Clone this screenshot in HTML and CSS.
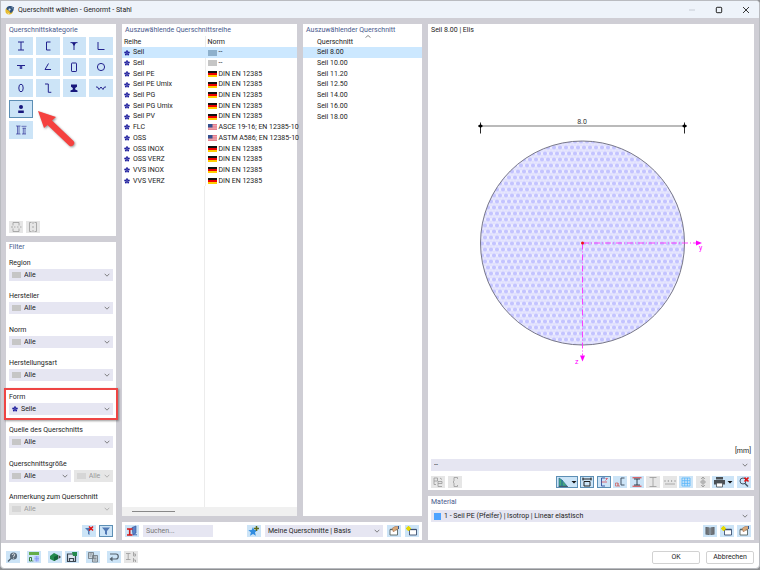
FILE: index.html
```
<!DOCTYPE html>
<html lang="de">
<head>
    <meta charset="UTF-8">
    <meta name="viewport" content="width=device-width, initial-scale=1.0">
    <title>Querschnitt wählen - Genormt - Stahl</title>
    <link rel="stylesheet" href="styles.css">
</head>
<body>
    <!-- Gemeinsame Symbole -->
    <svg class="symbols" width="0" height="0" aria-hidden="true">
        <symbol id="rope" viewBox="0 0 12 12">
            <g fill="#1c1c9c"><circle cx="6" cy="2.4" r="2"/><circle cx="9.6" cy="5" r="2"/><circle cx="8.2" cy="9.2" r="2"/><circle cx="3.8" cy="9.2" r="2"/><circle cx="2.4" cy="5" r="2"/><circle cx="6" cy="6" r="2"/></g>
        </symbol>
        <symbol id="chevron" viewBox="0 0 6 6"><path d="M.7 1.8 3 4.2 5.3 1.8" fill="none" stroke="#666" stroke-width=".8"/></symbol>
        <symbol id="de" viewBox="0 0 9 6"><path fill="#111" d="M0 0h9v2H0z"/><path fill="#e00" d="M0 2h9v2H0z"/><path fill="#fc0" d="M0 4h9v2H0z"/></symbol>
        <symbol id="us" viewBox="0 0 9 6"><path fill="#f3b3bb" d="M0 0h9v6H0z"/><path stroke="#dc6676" stroke-width=".7" d="M0 .5h9M0 2.2h9M0 3.9h9M0 5.6h9"/><path fill="#34508e" d="M0 0h4.500v3.500H0z"/></symbol>
        <symbol id="newwin" viewBox="0 0 14 12">
            <path fill="#fff" stroke="#3c5070" stroke-width=".9" d="M4.500 4.500h7v5.500h-7z"/><path stroke="#3c5070" stroke-width="1.300" d="M4.500 4.500h7"/><path stroke="#e6d800" stroke-width="1.200" d="M3.500 1v5M1 3.500h5M1.800 1.800l3.400 3.400M5.200 1.800 1.800 5.200"/>
        </symbol>
        <symbol id="editwin" viewBox="0 0 14 12">
            <path fill="#fff" stroke="#566" stroke-width=".9" d="M3 4.500h7.500V10H3z"/><path stroke="#566" stroke-width="1.300" d="M3 4.500h7.500"/><path fill="#d9a878" stroke="#96694a" stroke-width=".5" d="M5 3.500 8 1.500h3.500v2.200L8 5.500 6.500 7z"/><path stroke="#35578f" d="M11.500 1v3"/>
        </symbol>
    </svg>

    <div class="window">
        <header class="titlebar">
            <svg class="app-icon" viewBox="0 0 12 12"><circle cx="5" cy="7" r="4.500" fill="#e6bb2c"/><path d="M2 5.500C1 2 5 .5 8 1.500l3 1.500-1 4-3 3-2-3z" fill="#31547e"/><circle cx="5.500" cy="5.500" r="1.300" fill="#dce8f5"/><path d="M3 9.500l2 1M8 3l2 1" stroke="#fff" stroke-width=".6"/></svg>
            <h1>Querschnitt wählen - Genormt - Stahl</h1>
            <div class="window-controls">
                <button type="button" aria-label="Minimieren" disabled><svg viewBox="0 0 8 8"><path d="M1 4h6" stroke="#bcc2cb" stroke-width=".8"/></svg></button>
                <button type="button" aria-label="Maximieren"><svg viewBox="0 0 8 8"><rect x="1.300" y="1.300" width="5.400" height="5.400" rx=".8" fill="none" stroke="#222"/></svg></button>
                <button type="button" aria-label="Schließen"><svg viewBox="0 0 8 8"><path d="m1 1 6 6M7 1 1 7" stroke="#222" stroke-width=".9"/></svg></button>
            </div>
        </header>

        <main class="content">
            <!-- Linke Spalte -->
            <div class="col-left">
                <section class="panel category">
                    <h2>Querschnittskategorie</h2>
                    <div class="tiles">
                        <button type="button" aria-label="I-Profil"><svg viewBox="0 0 12 12"><path d="M3 2h6M3 10h6M6 2v8"/></svg></button>
                        <button type="button" aria-label="U-Profil"><svg viewBox="0 0 12 12"><path d="M8.500 2H4.500v8h4"/></svg></button>
                        <button type="button" aria-label="T-Profil"><svg viewBox="0 0 12 12"><path d="M2.500 2.600h7M6 2.500V10"/><path class="solid" d="M4 3h4L6 6z"/></svg></button>
                        <button type="button" aria-label="L-Profil"><svg viewBox="0 0 12 12"><path d="M3 2v7.500h6.500"/></svg></button>
                        <button type="button" aria-label="Doppel-L"><svg viewBox="0 0 12 12"><path d="M2 4.500h8M5.300 4.500V8M6.700 4.500V8"/></svg></button>
                        <button type="button" aria-label="Winkel"><svg viewBox="0 0 12 12"><path d="M6.500 2.500 3 8.500h6"/></svg></button>
                        <button type="button" aria-label="Rechteckrohr"><svg viewBox="0 0 12 12"><rect x="3.500" y="2" width="5" height="8.500" rx=".6"/></svg></button>
                        <button type="button" aria-label="Rundrohr"><svg viewBox="0 0 12 12"><circle cx="6" cy="6" r="3.600"/></svg></button>
                        <button type="button" aria-label="Oval"><svg viewBox="0 0 12 12"><ellipse cx="6" cy="6" rx="2.200" ry="3.800"/></svg></button>
                        <button type="button" aria-label="Z-Profil"><svg viewBox="0 0 12 12"><path d="M3 2h3.300v8.300h3"/></svg></button>
                        <button type="button" aria-label="Schiene"><svg viewBox="0 0 12 12"><path class="solid" d="M3 2.500h6v2.300L7.200 6v1.500L9.500 8.500V10h-7V8.500l2.300-1V6L3 4.800z"/></svg></button>
                        <button type="button" aria-label="Trapezblech"><svg viewBox="0 0 12 12"><path d="M1 5h1.500L4 7.500 6 5l2 2.500L9.500 5H11"/></svg></button>
                        <button type="button" class="selected" aria-label="Vollprofil"><svg viewBox="0 0 12 12"><circle class="solid" cx="6" cy="4" r="2"/><path class="solid" d="M3.200 7.500h5.600V10H3.200z"/></svg></button>
                        <button type="button" class="row-start" aria-label="Zusammengesetzt"><svg viewBox="0 0 12 12"><path class="thin" d="M1 2h4.500M1 10h4.500M2.500 2v8M4 2v8M6.500 2.300h5M7.500 4.200h3.500M8.300 4v6M10 4v6M7 10h4"/></svg></button>
                    </div>
                    <div class="mini-tools">
                        <button type="button" class="tool off" aria-label="Horizontal geteilt"><svg viewBox="0 0 14 12"><path d="M4 4.500v-3h6v3M4 7.500v3h6v-3M2 6h2M5 6h1.500M8 6h1.500M11 6h1.500"/></svg></button>
                        <button type="button" class="tool off" aria-label="Vertikal geteilt"><svg viewBox="0 0 14 12"><path d="M5.500 1.500H3.500v9h2M8.500 1.500h2v9h-2M7 1v2M7 5v2M7 9v2"/></svg></button>
                    </div>
                </section>

                <section class="panel filter">
                    <h2>Filter</h2>
                    <div class="fields">
                        <div class="field">
                            <label for="region">Region</label>
                            <div class="combo"><span class="swatch"></span><select id="region"><option>Alle</option></select><svg class="chev"><use href="#chevron"/></svg></div>
                        </div>
                        <div class="field">
                            <label for="hersteller">Hersteller</label>
                            <div class="combo"><span class="swatch"></span><select id="hersteller"><option>Alle</option></select><svg class="chev"><use href="#chevron"/></svg></div>
                        </div>
                        <div class="field">
                            <label for="norm">Norm</label>
                            <div class="combo"><span class="swatch"></span><select id="norm"><option>Alle</option></select><svg class="chev"><use href="#chevron"/></svg></div>
                        </div>
                        <div class="field">
                            <label for="art">Herstellungsart</label>
                            <div class="combo"><span class="swatch"></span><select id="art"><option>Alle</option></select><svg class="chev"><use href="#chevron"/></svg></div>
                        </div>
                        <div class="field marked">
                            <label for="form">Form</label>
                            <div class="combo"><svg class="rope"><use href="#rope"/></svg><select id="form"><option>Seile</option></select><svg class="chev"><use href="#chevron"/></svg></div>
                        </div>
                        <div class="field">
                            <label for="quelle">Quelle des Querschnitts</label>
                            <div class="combo"><span class="swatch"></span><select id="quelle"><option>Alle</option></select><svg class="chev"><use href="#chevron"/></svg></div>
                        </div>
                        <div class="field">
                            <label for="groesse">Querschnittsgröße</label>
                            <div class="pair">
                                <div class="combo wide"><span class="swatch"></span><select id="groesse"><option>Alle</option></select><svg class="chev"><use href="#chevron"/></svg></div>
                                <div class="combo off"><span class="swatch"></span><select aria-label="Größenwert" disabled><option>Alle</option></select><svg class="chev"><use href="#chevron"/></svg></div>
                            </div>
                        </div>
                        <div class="field">
                            <label for="anmerkung">Anmerkung zum Querschnitt</label>
                            <div class="combo off"><span class="swatch"></span><select id="anmerkung" disabled><option>Alle</option></select><svg class="chev"><use href="#chevron"/></svg></div>
                        </div>
                    </div>
                    <div class="filter-tools">
                        <button type="button" class="tool" aria-label="Filter löschen"><svg viewBox="0 0 14 12"><path fill="#5078b4" d="M3 3h7L7.500 6v4L6 9V6z"/><path stroke="#e01010" stroke-width="1.500" d="m7 1.500 4 4M11 1.500l-4 4"/></svg></button>
                        <button type="button" class="tool pressed" aria-label="Filter"><svg viewBox="0 0 14 12"><path fill="#5078b4" d="M3 2.500h8L8 6v4L6 9V6z"/></svg></button>
                    </div>
                </section>
            </div>

            <!-- Mittlere Spalte -->
            <div class="col-middle">
                <div class="lists">
                    <section class="panel series">
                        <h2>Auszuwählende Querschnittsreihe</h2>
                        <table class="series-table">
                            <thead>
                                <tr><th>Reihe</th><th>Norm</th></tr>
                            </thead>
                            <tbody>
                                <tr class="selected"><td><svg class="rope"><use href="#rope"/></svg>Seil</td><td><span class="swatch"></span>--</td></tr>
                                <tr><td><svg class="rope"><use href="#rope"/></svg>Seil</td><td><span class="swatch"></span>--</td></tr>
                                <tr><td><svg class="rope"><use href="#rope"/></svg>Seil PE</td><td><svg class="flag"><use href="#de"/></svg>DIN EN 12385</td></tr>
                                <tr><td><svg class="rope"><use href="#rope"/></svg>Seil PE Umix</td><td><svg class="flag"><use href="#de"/></svg>DIN EN 12385</td></tr>
                                <tr><td><svg class="rope"><use href="#rope"/></svg>Seil PG</td><td><svg class="flag"><use href="#de"/></svg>DIN EN 12385</td></tr>
                                <tr><td><svg class="rope"><use href="#rope"/></svg>Seil PG Umix</td><td><svg class="flag"><use href="#de"/></svg>DIN EN 12385</td></tr>
                                <tr><td><svg class="rope"><use href="#rope"/></svg>Seil PV</td><td><svg class="flag"><use href="#de"/></svg>DIN EN 12385</td></tr>
                                <tr><td><svg class="rope"><use href="#rope"/></svg>FLC</td><td><svg class="flag"><use href="#us"/></svg>ASCE 19-16; EN 12385-10</td></tr>
                                <tr><td><svg class="rope"><use href="#rope"/></svg>OSS</td><td><svg class="flag"><use href="#us"/></svg>ASTM A586; EN 12385-10</td></tr>
                                <tr><td><svg class="rope"><use href="#rope"/></svg>OSS INOX</td><td><svg class="flag"><use href="#de"/></svg>DIN EN 12385</td></tr>
                                <tr><td><svg class="rope"><use href="#rope"/></svg>OSS VERZ</td><td><svg class="flag"><use href="#de"/></svg>DIN EN 12385</td></tr>
                                <tr><td><svg class="rope"><use href="#rope"/></svg>VVS INOX</td><td><svg class="flag"><use href="#de"/></svg>DIN EN 12385</td></tr>
                                <tr><td><svg class="rope"><use href="#rope"/></svg>VVS VERZ</td><td><svg class="flag"><use href="#de"/></svg>DIN EN 12385</td></tr>
                            </tbody>
                        </table>
                        <div class="table-rest"></div>
                        <div class="scrollbar"><div class="thumb"></div></div>
                    </section>

                    <section class="panel sections">
                        <h2>Auszuwählender Querschnitt</h2>
                        <table class="section-table">
                            <thead>
                                <tr><th>Querschnitt<svg class="sort" viewBox="0 0 6 3"><path d="M.5 2.600 3 .5l2.500 2.100" fill="none" stroke="#555" stroke-width=".7"/></svg></th></tr>
                            </thead>
                            <tbody>
                                <tr class="selected"><td>Seil 8.00</td></tr>
                                <tr><td>Seil 10.00</td></tr>
                                <tr><td>Seil 11.20</td></tr>
                                <tr><td>Seil 12.50</td></tr>
                                <tr><td>Seil 14.00</td></tr>
                                <tr><td>Seil 16.00</td></tr>
                                <tr><td>Seil 18.00</td></tr>
                            </tbody>
                        </table>
                    </section>
                </div>

                <section class="panel searchbar">
                    <button type="button" class="tool" aria-label="Bibliothek"><svg viewBox="0 0 14 12"><path fill="#5b83c8" stroke="#2b4f98" stroke-width=".6" d="M7 2.500l4-1.500v7l-3 2z"/><path d="M2 4h5.500M2 10h5.500M4.700 4v6" stroke="#d01818" stroke-width="1.600"/><path d="M8 9.800h4" stroke="#4069b5"/></svg></button>
                    <input type="text" placeholder="Suchen..." aria-label="Suchen">
                    <button type="button" class="tool push" aria-label="Zu Favoriten hinzufügen"><svg viewBox="0 0 14 12"><path fill="#2f8ce0" d="m6 2 1.200 3 3.300.2L8 7.300l.8 3.500L6 9l-3 1.800.9-3.500L1.300 5.200 4.700 5z"/><path stroke="#5e6a18" stroke-width="1.500" d="M9.500 1v5M7 3.500h5"/></svg></button>
                    <div class="combo list"><select aria-label="Favoritenliste"><option>Meine Querschnitte | Basis</option></select><svg class="chev"><use href="#chevron"/></svg></div>
                    <button type="button" class="tool" aria-label="Liste bearbeiten"><svg><use href="#editwin"/></svg></button>
                    <button type="button" class="tool" aria-label="Neue Liste"><svg><use href="#newwin"/></svg></button>
                </section>
            </div>

            <!-- Rechte Spalte -->
            <div class="col-right">
                <section class="panel preview">
                    <p>Seil 8.00 | Elis</p>
                    <svg class="drawing" viewBox="0 0 320 408">
                        <defs>
                            <pattern id="strands" width="6" height="12" patternUnits="userSpaceOnUse">
                                <rect width="6" height="12" fill="#d9d9fb"/>
                                <g fill="#c4c4ff" stroke="#f8f8ff" stroke-width=".8"><circle cx="3" cy="3" r="2.700"/><circle cx="0" cy="9" r="2.700"/><circle cx="6" cy="9" r="2.700"/></g>
                            </pattern>
                        </defs>
                        <path d="M47 89.500h209" stroke="#777" stroke-width="1.200"/>
                        <path d="M49.500 86v11M253.500 86v11" stroke="#111" stroke-width=".9"/>
                        <path d="m47 89.500 2.500-2 2.500 2-2.500 2zM251 89.500l2.500-2 2.500 2-2.500 2z" fill="#000"/>
                        <text x="151" y="87" text-anchor="middle">8.0</text>
                        <circle cx="151.500" cy="206.500" r="102" fill="url(#strands)" stroke="#777788"/>
                        <g stroke="#ff2cff" stroke-width=".9" stroke-dasharray="6 2 1 2"><path d="M152 206.500h114M151.500 207v112"/></g>
                        <path fill="#f0f" d="m265 204 6 2.500-6 2.500zM149 319l2.500 6 2.500-6z"/>
                        <circle cx="151.500" cy="206.500" r="1.500" fill="#f01010"/>
                        <text class="axis" x="268" y="213">y</text>
                        <text class="axis" x="144" y="327">z</text>
                    </svg>
                    <p class="unit">[mm]</p>
                    <div class="combo"><select aria-label="Bezeichnung"><option>--</option></select><svg class="chev"><use href="#chevron"/></svg></div>
                    <div class="view-tools">
                        <div class="group">
                            <button type="button" class="tool off" aria-label="Drehen"><svg viewBox="0 0 14 12"><path d="M3 2h3.500v3H3zM3 5v3.500h2M7 5.500h4v2H7zM7 7.500v3h4M9 2l2 1.500"/></svg></button>
                            <button type="button" class="tool off" aria-label="Spiegeln"><svg viewBox="0 0 14 12"><path d="M9.500 3V1.500H6V5L5 6l1 1v3.500h3.500V9"/></svg></button>
                        </div>
                        <div class="group view">
                            <button type="button" class="tool drop pressed" aria-label="Darstellung"><svg viewBox="0 0 22 12"><path fill="#46a878" stroke="#276f9b" stroke-width=".7" d="M3 10V2l3 2v6zM6 10V4l5 6z"/><path stroke="#234" stroke-width=".7" d="M2.500 10.500H12"/><path fill="#111" d="M15.500 5h5L18 7.500z"/></svg></button>
                            <button type="button" class="tool pressed" aria-label="Bemaßung"><svg viewBox="0 0 14 12"><path fill="none" stroke="#222" d="M4 5.500h6v4.500H4zM2.500 3h9M3 1.500v3M11 1.500v3"/></svg></button>
                            <button type="button" class="tool pressed" aria-label="Hauptachsen"><svg viewBox="0 0 14 12"><path fill="none" stroke="#3b5aa5" d="M8 2H4.500v8H8"/><path fill="none" stroke="#d34" stroke-width=".7" d="M4.500 6H10M8.500 2.500h2M8.500 4.500l2-2"/></svg></button>
                            <button type="button" class="tool" aria-label="Eingabeachsen"><svg viewBox="0 0 14 12"><path fill="none" stroke="#456" d="M11.500 2H8v7h3.500"/><path fill="none" stroke="#c66" stroke-width=".8" d="M2.500 7h2.500v3H2.500zM5 7v3h2"/></svg></button>
                            <button type="button" class="tool" aria-label="Steg"><svg viewBox="0 0 14 12"><path stroke="#d33" d="M2.500 1.800h9M2.500 10.200h9"/><path stroke="#234" stroke-width=".9" d="M4 3h6M4 9h6M7 3v6"/></svg></button>
                            <button type="button" class="tool off" aria-label="Profil"><svg viewBox="0 0 14 12"><path d="M3.500 1.500h7M3.500 10.500h7M7 1.500v9"/></svg></button>
                            <button type="button" class="tool off" aria-label="Maßkette"><svg viewBox="0 0 14 12"><path d="M2 8h10M2 4v2M5.300 4v2M8.600 4v2M12 4v2"/></svg></button>
                            <button type="button" class="tool" aria-label="Raster"><svg viewBox="0 0 14 12"><path stroke="#55b5fb" stroke-width=".8" d="M3 2h8M3 4.700h8M3 7.400h8M3 10h8M3 2v8M5.700 2v8M8.400 2v8M11 2v8"/></svg></button>
                            <button type="button" class="tool off" aria-label="Schnitt"><svg viewBox="0 0 14 12"><path d="M7 1v10M5 3l2-2 2 2M5 9l2 2 2-2M5 5h4v2H5z"/></svg></button>
                            <button type="button" class="tool drop" aria-label="Drucken"><svg viewBox="0 0 22 12"><path fill="#4b5055" d="M4 1h7v2.500H4zM2 4h11v4.500H2z"/><path fill="#fff" stroke="#4b5055" stroke-width=".8" d="M4.500 7h6v4h-6z"/><path fill="#111" d="M15.500 5h5L18 7.500z"/></svg></button>
                            <button type="button" class="tool" aria-label="Zoom zurücksetzen"><svg viewBox="0 0 14 12"><circle cx="6" cy="5" r="3" fill="none" stroke="#456"/><path stroke="#456" stroke-width="1.500" d="m8 7.500 3 3"/><path stroke="#e01010" stroke-width="1.600" d="m7.500 1.500 4 4M11.500 1.500l-4 4"/></svg></button>
                        </div>
                    </div>
                </section>

                <section class="panel material">
                    <h2>Material</h2>
                    <div class="combo"><span class="swatch blue"></span><select aria-label="Material"><option>1 - Seil PE (Pfeifer) | Isotrop | Linear elastisch</option></select><svg class="chev"><use href="#chevron"/></svg></div>
                    <div class="material-tools">
                        <button type="button" class="tool" aria-label="Materialbibliothek"><svg viewBox="0 0 14 12"><path fill="#55595e" d="M2.500 2 6.600 2.600V10l-4.100-.5zM11.500 2l-4.100.600V10l4.100-.5z"/><path stroke="#a6abb0" stroke-width=".5" d="M4 3v6M5.300 3v6M8.700 3v6M10 3v6"/></svg></button>
                        <button type="button" class="tool" aria-label="Neues Material"><svg><use href="#newwin"/></svg></button>
                        <button type="button" class="tool" aria-label="Material bearbeiten"><svg><use href="#editwin"/></svg></button>
                    </div>
                </section>
            </div>
        </main>

        <footer class="footer">
            <div class="footer-tools">
                <button type="button" class="tool" aria-label="Hilfe"><svg viewBox="0 0 14 12"><circle cx="7.500" cy="5" r="3.600" fill="#5a6a78"/><path stroke="#4a5a68" stroke-width="1.300" d="m5 7.500-3 3"/><path fill="none" stroke="#fff" stroke-width=".8" d="M6.300 4c0-1.800 2.600-1.500 2.400 0C8.500 5 7.500 5 7.500 6M7.500 6.800v.8"/></svg></button>
                <button type="button" class="tool gap" aria-label="Einheiten"><svg viewBox="0 0 14 12"><path fill="#65ad4b" d="M2 1h10v3H2z"/><path fill="#aebfff" d="M7.500 5H12v5.500H7.500z"/><path fill="none" stroke="#29702c" stroke-width=".9" d="M2.500 6.500h2v3.500h-2zM5.800 9.500v1"/><path stroke="#7c90ee" stroke-width=".6" d="M7.500 7.700h4.500M9.700 5v5.500"/></svg></button>
                <button type="button" class="tool gap" aria-label="Import"><svg viewBox="0 0 14 12"><path fill="#23894c" d="m2 5 4-3 4 2v4l-4 2-4-2z"/><path fill="#136238" d="m6 6 4-2v4l-4 2z"/><path fill="#444" d="m10.500 4 2.500 2-2.500 2z"/></svg></button>
                <button type="button" class="tool" aria-label="Speichern"><svg viewBox="0 0 14 12"><path fill="#dbe4ee" stroke="#3a4652" stroke-width="1.200" d="M2.500 3h8v7.500h-8zM4.500 10V7.500h4V10"/><path fill="#23894c" d="M7 1h5v4H8z"/></svg></button>
                <button type="button" class="tool gap" aria-label="Kopieren"><svg viewBox="0 0 14 12"><path fill="#ced8e0" stroke="#68727a" stroke-width=".8" d="M2.500 1.500h5v6h-5zM6.500 4.500h5V11h-5z"/><path stroke="#68727a" stroke-width=".7" d="M3.500 3h3M3.500 5h2M7.500 6h3M7.500 7.500h3M7.500 9h3"/></svg></button>
                <button type="button" class="tool gap" aria-label="Rückgängig"><svg viewBox="0 0 14 12"><path fill="none" stroke="#55626e" stroke-width="1.200" d="M3 3h6c3 0 3 5 0 5H4"/><path fill="#55626e" d="M5.500 5.500v5L2.500 8z"/></svg></button>
                <button type="button" class="tool off" aria-label="Abmessungen"><svg viewBox="0 0 14 12"><path d="M2 2.500h4.500M2 8.500h4.500M4.200 2.500v6M9.500 1v4h2V3h-2M9.500 7v4M9.500 9h2v2"/></svg></button>
            </div>
            <div class="dialog-buttons">
                <button type="button">OK</button>
                <button type="button">Abbrechen</button>
            </div>
        </footer>
    </div>

    <!-- Hinweispfeil auf die gewählte Kategorie -->
    <svg class="pointer" viewBox="0 0 40 38"><path d="M1 1 19 7l-4 3.500 21.500 20.500a3.200 3.200 0 0 1-4.500 4.500L10.500 15 7 18z" fill="#f5413f"/></svg>
</body>
</html>
```
FILE: styles.css
```
* {
    box-sizing: border-box;
}
body {
    margin: 0;
    height: 100vh;
    font-family: Roboto, "Open Sans", sans-serif;
    font-size: 7px;
    line-height: 10px;
    color: #1c1c1c;
    background-color: #8d8f92;
}
h1, h2, p {
    margin: 0;
    font-size: 7px;
    font-weight: 400;
}
h2 {
    padding: 1px 3px 0;
    color: #48598c;
}
button, input, select {
    font: inherit;
    color: inherit;
    border: none;
    border-radius: 0;
    margin: 0;
    padding: 0;
}
svg {
    display: block;
    flex: none;
}
.symbols {
    position: absolute;
}
.window {
    display: flex;
    flex-direction: column;
    height: calc(100vh - 1px);
    border: 1px solid #b9bbc0;
    border-radius: 0 4px 4px 4px;
    background-color: #fff;
    overflow: hidden;
}

/* Titelleiste */
.titlebar {
    display: flex;
    align-items: center;
    flex: none;
    gap: 3px;
    height: 17px;
    padding-left: 4px;
    background-color: #eef3fa;
}
.app-icon {
    width: 10px;
    height: 10px;
}
.window-controls {
    display: flex;
    margin-left: auto;
}
.window-controls button {
    display: grid;
    place-items: center;
    width: 27px;
    height: 17px;
    background: none;
}
.window-controls svg {
    width: 8px;
    height: 8px;
}

/* Aufbau */
.content {
    display: flex;
    flex: 1;
    gap: 6px;
    min-height: 0;
    padding: 6px 5px 3px;
    background-color: #cfced5;
}
.col-left, .col-middle, .col-right {
    display: flex;
    flex-direction: column;
    gap: 6px;
}
.col-left {
    flex: 0 0 110px;
}
.col-middle {
    flex: 0 0 300px;
}
.col-right {
    flex: 1;
    min-width: 0;
}
.panel {
    display: flex;
    flex-direction: column;
    background-color: #fff;
}

/* Werkzeugknöpfe */
.tool {
    flex: none;
    width: 14px;
    height: 12px;
    background-color: #cce4f7;
}
.tool svg {
    width: 100%;
    height: 100%;
}
.tool.drop {
    width: 22px;
}
.tool.pressed {
    outline: 1px solid #5d8fb5;
    outline-offset: -1px;
}
.tool.off {
    background-color: #e6e6e6;
}
.tool.off path {
    fill: none;
    stroke: #999;
    stroke-width: .8;
}

/* Auswahlfelder */
.combo {
    display: flex;
    align-items: center;
    gap: 3px;
    height: 12px;
    padding: 0 3px;
    background-color: #e6e6f2;
}
.combo select {
    flex: 1;
    min-width: 0;
    height: 12px;
    appearance: none;
    background: none;
    opacity: 1;
}
.combo.off {
    background-color: #e6e6e6;
    color: #999;
}
.combo.off .swatch {
    background-color: #d6d6d6;
}
.chev {
    width: 6px;
    height: 6px;
}
.off .chev {
    opacity: .5;
}
.swatch, .flag {
    display: block;
    flex: none;
    width: 9px;
    height: 6px;
    background-color: #c6c6c6;
}
.swatch.blue {
    width: 7px;
    height: 7px;
    background-color: #4da3ff;
}
.rope {
    width: 6px;
    height: 6px;
}

/* Kategorien */
.category {
    flex: 0 0 212px;
    padding-bottom: 3px;
}
.tiles {
    display: grid;
    grid-template-columns: repeat(4, 1fr);
    gap: 3px;
    padding: 2px 3px;
}
.tiles button {
    display: grid;
    place-items: center;
    height: 18px;
    background-color: #cce4f7;
}
.tiles button.selected {
    border: 1px solid #5d8fb5;
}
.tiles .row-start {
    grid-column: 1;
}
.tiles svg {
    width: 12px;
    height: 12px;
    fill: none;
    stroke: #23238e;
    stroke-width: 1;
}
.tiles .solid {
    fill: #17177d;
    stroke: none;
}
.tiles .thin {
    stroke-width: .6;
}
.mini-tools {
    display: flex;
    gap: 3px;
    margin-top: auto;
    padding: 0 3px;
}

/* Filter */
.filter {
    flex: 1;
    padding-bottom: 3px;
}
.filter h2 {
    padding-top: 0;
}
.fields {
    display: flex;
    flex: 1;
    flex-direction: column;
    justify-content: space-between;
    padding: 6px 3px 10px;
}
.field label {
    display: block;
    padding-bottom: 1px;
}
.field.marked {
    position: relative;
}
.field.marked::after {
    content: "";
    position: absolute;
    inset: -4px -5px -5px;
    border: 2px solid #ee4544;
    box-shadow: 1px 1px 2px rgba(0, 0, 0, .4);
    pointer-events: none;
}
.pair {
    display: flex;
    gap: 3px;
}
.pair .combo {
    flex: 3;
    min-width: 0;
}
.pair .combo.wide {
    flex: 5;
}
.filter-tools {
    display: flex;
    justify-content: flex-end;
    gap: 3px;
    padding: 0 3px;
}

/* Listen */
.lists {
    display: flex;
    flex: 1;
    gap: 6px;
}
.lists h2 {
    padding-bottom: 1px;
}
.series {
    flex: 0 0 175px;
}
.sections {
    flex: 1;
}
table {
    width: 100%;
    border-collapse: collapse;
    table-layout: fixed;
}
.series-table {
    height: 150px;
}
.section-table {
    height: 86px;
}
th, td {
    padding: 0;
    font-weight: 400;
    line-height: 8px;
    text-align: left;
    white-space: nowrap;
}
thead tr {
    height: 11px;
}
tr.selected {
    background-color: #cce8ff;
}
tr.selected .swatch {
    background-color: #8db0cc;
}
.series-table th, .series-table td {
    padding-left: 2px;
}
.series-table th:first-child, .series-table td:first-child {
    width: 83px;
    border-right: 1px solid #ececec;
}
.series-table tr.selected td {
    border-color: #cce8ff;
}
td .rope, td .swatch, td .flag {
    display: inline-block;
    margin-right: 2px;
    vertical-align: middle;
}
td .rope {
    margin-right: 3px;
}
.table-rest {
    flex: 1;
    width: 83px;
    border-right: 1px solid #ececec;
}
.scrollbar {
    height: 9px;
    padding: 4px 10px;
    background-color: #f0f0f0;
}
.thumb {
    width: 28%;
    height: 1px;
    background-color: #888;
}
.section-table th, .section-table td {
    padding-left: 14px;
}
.section-table th {
    position: relative;
}
.sort {
    position: absolute;
    left: 62px;
    top: -1px;
    width: 6px;
    height: 3px;
}

/* Suche */
.searchbar {
    flex-direction: row;
    align-items: center;
    gap: 4px;
    height: 18px;
    padding: 0 3px;
}
.searchbar input {
    width: 70px;
    height: 12px;
    padding: 0 3px;
    background-color: #e6e6f2;
}
.searchbar input::placeholder {
    color: #777;
}
.searchbar .push {
    margin-left: auto;
}
.searchbar .list {
    width: 118px;
}

/* Vorschau */
.preview {
    flex: 1;
    min-height: 0;
    padding: 1px 3px 2px;
}
.drawing {
    flex: 1;
    width: 100%;
    min-height: 0;
}
.drawing text {
    font-size: 7px;
    fill: #333;
}
.drawing .axis {
    fill: #f0f;
}
.unit {
    text-align: right;
    margin-bottom: 3px;
}
.view-tools {
    display: flex;
    justify-content: space-between;
    margin-top: 5px;
}
.group {
    display: flex;
    gap: 3px;
}
.group.view {
    width: 61%;
    gap: 0;
    justify-content: space-between;
}

/* Material */
.material {
    padding: 1px 3px 3px;
}
.material h2 {
    padding: 0;
    margin-bottom: 3px;
}
.material-tools {
    display: flex;
    justify-content: flex-end;
    gap: 3px;
    margin-top: 3px;
}

/* Fußzeile */
.footer {
    display: flex;
    align-items: center;
    justify-content: space-between;
    flex: none;
    height: 25px;
    padding: 3px 5px 0;
}
.footer-tools {
    display: flex;
    gap: 3px;
}
.footer-tools .gap {
    margin-left: 4px;
}
.dialog-buttons {
    display: flex;
    gap: 6px;
}
.dialog-buttons button {
    width: 48px;
    height: 13px;
    border: 1px solid #d2d2d2;
    border-radius: 2px;
    background-color: #fff;
}

.pointer {
    position: absolute;
    left: 37px;
    top: 110px;
    width: 40px;
    height: 38px;
    filter: drop-shadow(1px 1px 1px rgba(0, 0, 0, .4));
}
```
